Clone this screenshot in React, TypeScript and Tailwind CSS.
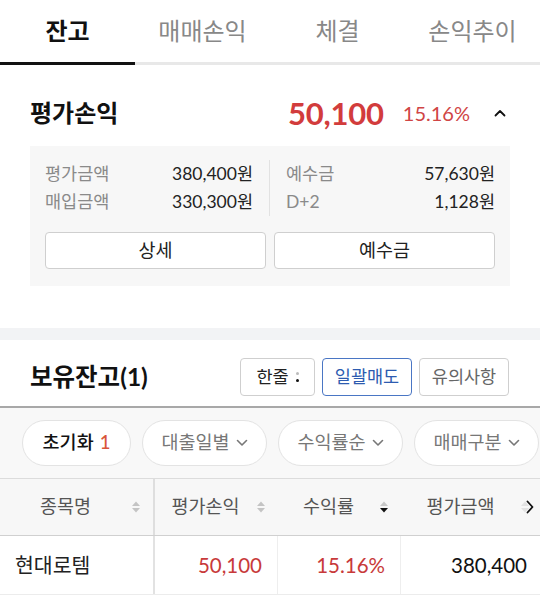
import React from "react";

function SortIcon({ active = false }: { active?: boolean }) {
  return (
    <svg width="10" height="14" viewBox="0 0 10 14" className="shrink-0">
      <path d="M1 6 L5 1.5 L9 6 Z" fill={active ? "#c8c8c8" : "#c4c4c4"} />
      <path d="M1 8 L5 12.5 L9 8 Z" fill={active ? "#111" : "#c4c4c4"} />
    </svg>
  );
}

function ChevronDown() {
  return (
    <svg width="12" height="8" viewBox="0 0 12 8" className="shrink-0">
      <path d="M1.5 1.5 L6 6 L10.5 1.5" stroke="#777" strokeWidth="1.6" fill="none" strokeLinecap="round" strokeLinejoin="round" />
    </svg>
  );
}

export default function App() {
  const tabs = ["잔고", "매매손익", "체결", "손익추이"];
  return (
    <div className="w-[540px] h-[602px] overflow-hidden bg-white font-['Lato','Noto_Sans_CJK_KR',sans-serif] text-[#222]">
      {/* Tabs */}
      <div className="grid grid-cols-4 h-[65px] border-b-[3px] border-[#e8e8e8]">
        {tabs.map((t, i) => (
          <div
            key={t}
            className={
              i === 0
                ? "flex items-center justify-center text-[24px] font-bold text-[#111] border-b-[3px] border-[#111] -mb-[3px]"
                : "flex items-center justify-center text-[24px] text-[#888]"
            }
          >
            {t}
          </div>
        ))}
      </div>

      {/* 평가손익 */}
      <div className="px-[30px] pt-[27px] pb-[42px]">
        <div className="flex items-center h-[42px]">
          <div className="text-[24px] font-bold text-[#111] flex-1">평가손익</div>
          <div className="text-[31px] font-bold text-[#d23c3c] tracking-[-0.2px]">50,100</div>
          <div className="ml-[19px] text-[20px] text-[#d04545]">15.16%</div>
          <svg width="12" height="8" viewBox="0 0 12 8" className="ml-[24px] mr-[4px]">
            <path d="M1.5 6.5 L6 2 L10.5 6.5" stroke="#111" strokeWidth="1.8" fill="none" strokeLinecap="round" strokeLinejoin="round" />
          </svg>
        </div>
        <div className="mt-[12px] bg-[#f7f7f7] px-[15px] pt-[14px] pb-[17px]">
          <div className="grid grid-cols-2">
            <div className="pr-[16px] border-r border-[#e2e2e2]">
              <div className="flex justify-between items-center h-[28px]">
                <span className="text-[17.5px] text-[#8a8a8a]">평가금액</span>
                <span className="text-[17.5px] text-[#222]">380,400원</span>
              </div>
              <div className="flex justify-between items-center h-[28px]">
                <span className="text-[17.5px] text-[#8a8a8a]">매입금액</span>
                <span className="text-[17.5px] text-[#222]">330,300원</span>
              </div>
            </div>
            <div className="pl-[16px]">
              <div className="flex justify-between items-center h-[28px]">
                <span className="text-[17.5px] text-[#8a8a8a]">예수금</span>
                <span className="text-[17.5px] text-[#222]">57,630원</span>
              </div>
              <div className="flex justify-between items-center h-[28px]">
                <span className="text-[17.5px] text-[#8a8a8a]">D+2</span>
                <span className="text-[17.5px] text-[#222]">1,128원</span>
              </div>
            </div>
          </div>
          <div className="grid grid-cols-2 gap-[8px] mt-[16px]">
            <div className="h-[37px] flex items-center justify-center bg-white border border-[#cfcfcf] rounded-[4px] text-[18.5px] text-[#222]">상세</div>
            <div className="h-[37px] flex items-center justify-center bg-white border border-[#cfcfcf] rounded-[4px] text-[18.5px] text-[#222]">예수금</div>
          </div>
        </div>
      </div>

      {/* separator */}
      <div className="h-[12px] bg-[#f2f3f5]" />

      {/* 보유잔고 */}
      <div className="flex items-center h-[68px] pt-[8px] pl-[30px] pr-[31px] border-b-2 border-[#a8a8a8]">
        <div className="flex-1 text-[24.5px] font-bold text-[#111]">보유잔고(1)</div>
        <div className="flex gap-[7px]">
          <div className="h-[38px] w-[75px] flex items-center justify-center gap-[7px] border border-[#cfcfcf] rounded-[4px] text-[17.5px] text-[#222]">
            한줄
            <span className="flex flex-col gap-[4px]">
              <span className="w-[3px] h-[3px] rounded-full bg-[#bbb]" />
              <span className="w-[3px] h-[3px] rounded-full bg-[#111]" />
            </span>
          </div>
          <div className="h-[38px] w-[90px] flex items-center justify-center border border-[#4a76c4] rounded-[4px] text-[17.5px] text-[#2d5bb0]">일괄매도</div>
          <div className="h-[38px] w-[90px] flex items-center justify-center border border-[#cfcfcf] rounded-[4px] text-[17.5px] text-[#666]">유의사항</div>
        </div>
      </div>

      {/* filters */}
      <div className="h-[70px] bg-[#f8f8f8] flex items-center gap-[11px] pl-[22px] overflow-hidden whitespace-nowrap">
        <div className="h-[46px] w-[109px] shrink-0 flex items-center justify-center bg-white border border-[#e3e3e3] rounded-full text-[18.5px] font-medium text-[#111]">
          초기화<span className="ml-[6px] text-[#d9553a]">1</span>
        </div>
        {["대출일별", "수익률순", "매매구분"].map((t) => (
          <div key={t} className="h-[46px] w-[125px] shrink-0 flex items-center justify-center gap-[6px] bg-white border border-[#e3e3e3] rounded-full text-[18.5px] text-[#777]">
            {t}
            <ChevronDown />
          </div>
        ))}
      </div>

      {/* table */}
      <div className="border-t border-[#dcdcdc]">
        <div className="flex h-[57px] bg-[#f7f7f7] border-b border-[#d0d0d0] text-[18.5px] text-[#555]">
          <div className="w-[155px] flex items-center pr-[12px] border-r-2 border-[#dedede]">
            <span className="flex-1 text-center">종목명</span>
            <SortIcon />
          </div>
          <div className="w-[123px] flex items-center pr-[12px]">
            <span className="flex-1 text-center">평가손익</span>
            <SortIcon />
          </div>
          <div className="w-[123px] flex items-center pr-[12px]">
            <span className="flex-1 text-center">수익률</span>
            <SortIcon active />
          </div>
          <div className="relative flex-1 flex items-center pr-[10px]">
            <span className="flex-1 text-center">평가금액</span>
            <span className="opacity-40"><SortIcon /></span>
            <svg width="10" height="14" viewBox="0 0 10 14" className="absolute right-[5px] top-[21px]">
              <path d="M2.5 1.5 L7.5 7 L2.5 12.5" stroke="#111" strokeWidth="1.8" fill="none" strokeLinecap="round" strokeLinejoin="round" />
            </svg>
          </div>
        </div>
        <div className="flex h-[59px] border-b border-[#ececec] text-[20.5px]">
          <div className="w-[155px] flex items-center pl-[15px] border-r-2 border-[#e2e2e2] text-[#222]">현대로템</div>
          <div className="w-[123px] flex items-center justify-end pr-[15px] border-r border-[#eeeeee] text-[#c83a3a]">50,100</div>
          <div className="w-[123px] flex items-center justify-end pr-[15px] border-r border-[#eeeeee] text-[#c83a3a]">15.16%</div>
          <div className="flex-1 flex items-center justify-end pr-[13px] text-[#111]">380,400</div>
        </div>
      </div>
    </div>
  );
}
